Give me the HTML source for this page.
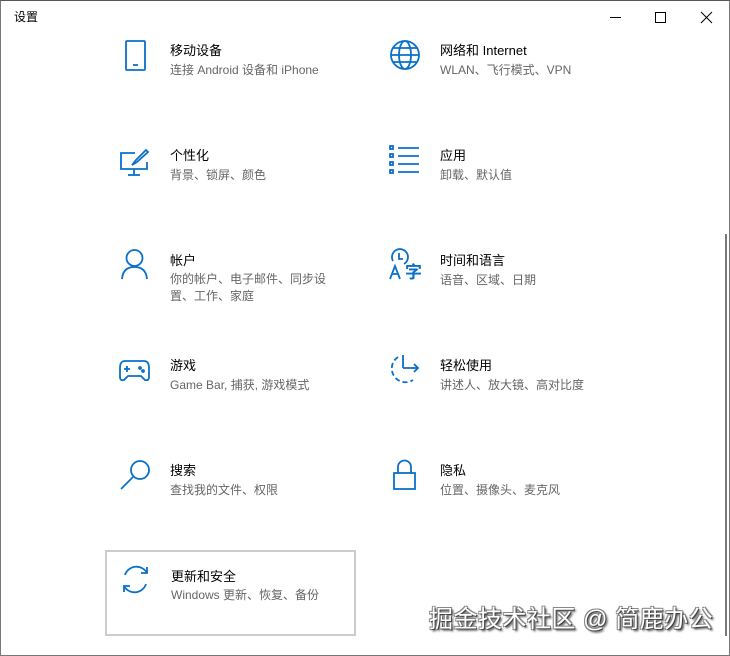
<!DOCTYPE html><html><head><meta charset="utf-8"><style>
body{margin:0;width:730px;height:656px;background:#fff;position:relative;overflow:hidden;font-family:"Liberation Sans","Noto Sans CJK SC",sans-serif}
.win{position:absolute;left:0;top:0;width:728px;height:654px;border:1px solid #777;border-top:1px solid #555}
.t{position:absolute;font-size:13px;color:#000;line-height:16px;margin-top:1px}
.s{position:absolute;font-size:12px;color:#666;line-height:18px;margin-top:1px}
svg{position:absolute;overflow:visible}
svg *{stroke:#0a70c8;fill:none;stroke-width:1.8}
</style></head><body>
<div class="win"></div>
<div class="t" style="left:14px;top:8px;font-size:12px">设置</div>
<div style="position:absolute;left:610px;top:17px;width:11px;height:1px;background:#000"></div>
<div style="position:absolute;left:655px;top:12px;width:9px;height:9px;border:1px solid #000"></div>
<svg style="left:701px;top:12px" width="11" height="11"><path d="M0 0 L11 11 M11 0 L0 11" style="stroke:#000;stroke-width:1"/></svg>
<div style="position:absolute;left:725px;top:234px;width:2px;height:402px;background:#7a7a7a"></div>

<svg style="left:125px;top:40px" width="22" height="32"><rect x="1" y="1" width="19" height="29" rx="1"/><line x1="8" y1="25" x2="13" y2="25"/></svg>
<div class="t" style="left:170px;top:42px">移动设备</div><div class="s" style="left:170px;top:60px">连接 Android 设备和 iPhone</div>

<svg style="left:390px;top:40px" width="32" height="32"><circle cx="15" cy="15" r="14"/><ellipse cx="15" cy="15" rx="6" ry="14"/><line x1="1" y1="15" x2="29" y2="15"/><line x1="3" y1="8" x2="27" y2="8"/><line x1="3" y1="22" x2="27" y2="22"/></svg>
<div class="t" style="left:440px;top:42px">网络和 Internet</div><div class="s" style="left:440px;top:60px">WLAN、飞行模式、VPN</div>

<svg style="left:120px;top:148px" width="30" height="30"><polyline points="15,5 1,5 1,21 27,21 27,14"/><line x1="14" y1="21" x2="14" y2="27"/><line x1="8" y1="27" x2="20" y2="27"/><path d="M26 2 L16 12 L12 17 L17 14 L28 4 Z"/></svg>
<div class="t" style="left:170px;top:147px">个性化</div><div class="s" style="left:170px;top:165px">背景、锁屏、颜色</div>

<svg style="left:389px;top:145px" width="32" height="30"><rect x="1" y="1" width="3" height="3"/><rect x="1" y="9" width="3" height="3"/><rect x="1" y="17" width="3" height="3"/><rect x="1" y="25" width="3" height="3"/><line x1="9" y1="3" x2="30" y2="3"/><line x1="9" y1="11" x2="30" y2="11"/><line x1="9" y1="19" x2="30" y2="19"/><line x1="9" y1="27" x2="30" y2="27"/></svg>
<div class="t" style="left:440px;top:147px">应用</div><div class="s" style="left:440px;top:165px">卸载、默认值</div>

<svg style="left:121px;top:249px" width="28" height="32"><circle cx="13.5" cy="9" r="8"/><path d="M1 30 Q2 18 13.5 18 Q25 18 26 30"/></svg>
<div class="t" style="left:170px;top:252px">帐户</div><div class="s" style="left:170px;top:270px;line-height:17px">你的帐户、电子邮件、同步设<br>置、工作、家庭</div>

<svg style="left:388px;top:249px" width="36" height="32"><path d="M5 12 A8 8 0 1 1 16 15"/><polyline points="11,4 11,10 15,10"/><path d="M2 30 L7 17 L12 30 M4 25 L10 25" /><text x="17" y="29" style="font:bold 17px 'Noto Sans CJK SC';fill:#0a70c8;stroke:none">字</text></svg>
<div class="t" style="left:440px;top:252px">时间和语言</div><div class="s" style="left:440px;top:270px">语音、区域、日期</div>

<svg style="left:119px;top:359px" width="32" height="24"><path d="M6 2 H25 Q30 2 30 9 V18 Q30 22 26 21 L22 17 H9 L5 21 Q1 22 1 18 V9 Q1 2 6 2 Z"/><line x1="5" y1="10" x2="11" y2="10"/><line x1="8" y1="7" x2="8" y2="13"/><circle cx="21" cy="9" r="1"/><circle cx="24" cy="12" r="1"/></svg>
<div class="t" style="left:170px;top:357px">游戏</div><div class="s" style="left:170px;top:375px">Game Bar, 捕获, 游戏模式</div>

<svg style="left:388px;top:353px" width="34" height="32"><path d="M10 4 A13 13 0 1 0 25 27" stroke-dasharray="5 3"/><line x1="15" y1="2" x2="15" y2="15"/><line x1="15" y1="15" x2="30" y2="15"/><polyline points="26,11 30,15 26,19"/></svg>
<div class="t" style="left:440px;top:357px">轻松使用</div><div class="s" style="left:440px;top:375px">讲述人、放大镜、高对比度</div>

<svg style="left:119px;top:459px" width="34" height="32"><circle cx="21" cy="11" r="9"/><line x1="14" y1="18" x2="2" y2="30"/></svg>
<div class="t" style="left:170px;top:462px">搜索</div><div class="s" style="left:170px;top:480px">查找我的文件、权限</div>

<svg style="left:393px;top:459px" width="24" height="32"><rect x="1" y="14" width="21" height="16"/><path d="M5 14 V8 A6.5 6.5 0 0 1 18 8 V14"/></svg>
<div class="t" style="left:440px;top:462px">隐私</div><div class="s" style="left:440px;top:480px">位置、摄像头、麦克风</div>

<div style="position:absolute;left:105px;top:550px;width:247px;height:82px;border:2px solid #ccc"></div>
<svg style="left:120px;top:565px" width="32" height="30"><path d="M5 10 A12 12 0 0 1 27 8"/><polyline points="27,2 27,8 21,8"/><path d="M26 19 A12 12 0 0 1 4 21"/><polyline points="4,27 4,21 10,21"/></svg>
<div class="t" style="left:171px;top:568px">更新和安全</div><div class="s" style="left:171px;top:585px">Windows 更新、恢复、备份</div>

<div style="position:absolute;left:429px;top:605px;font-size:24px;color:#fff;line-height:30px;text-shadow:1px 1px 0 #444,-1px -1px 0 #888,1px -1px 0 #888,-1px 1px 0 #888,2px 2px 2px #333;letter-spacing:0.5px">掘金技术社区 @ 简鹿办公</div>
</body></html>
